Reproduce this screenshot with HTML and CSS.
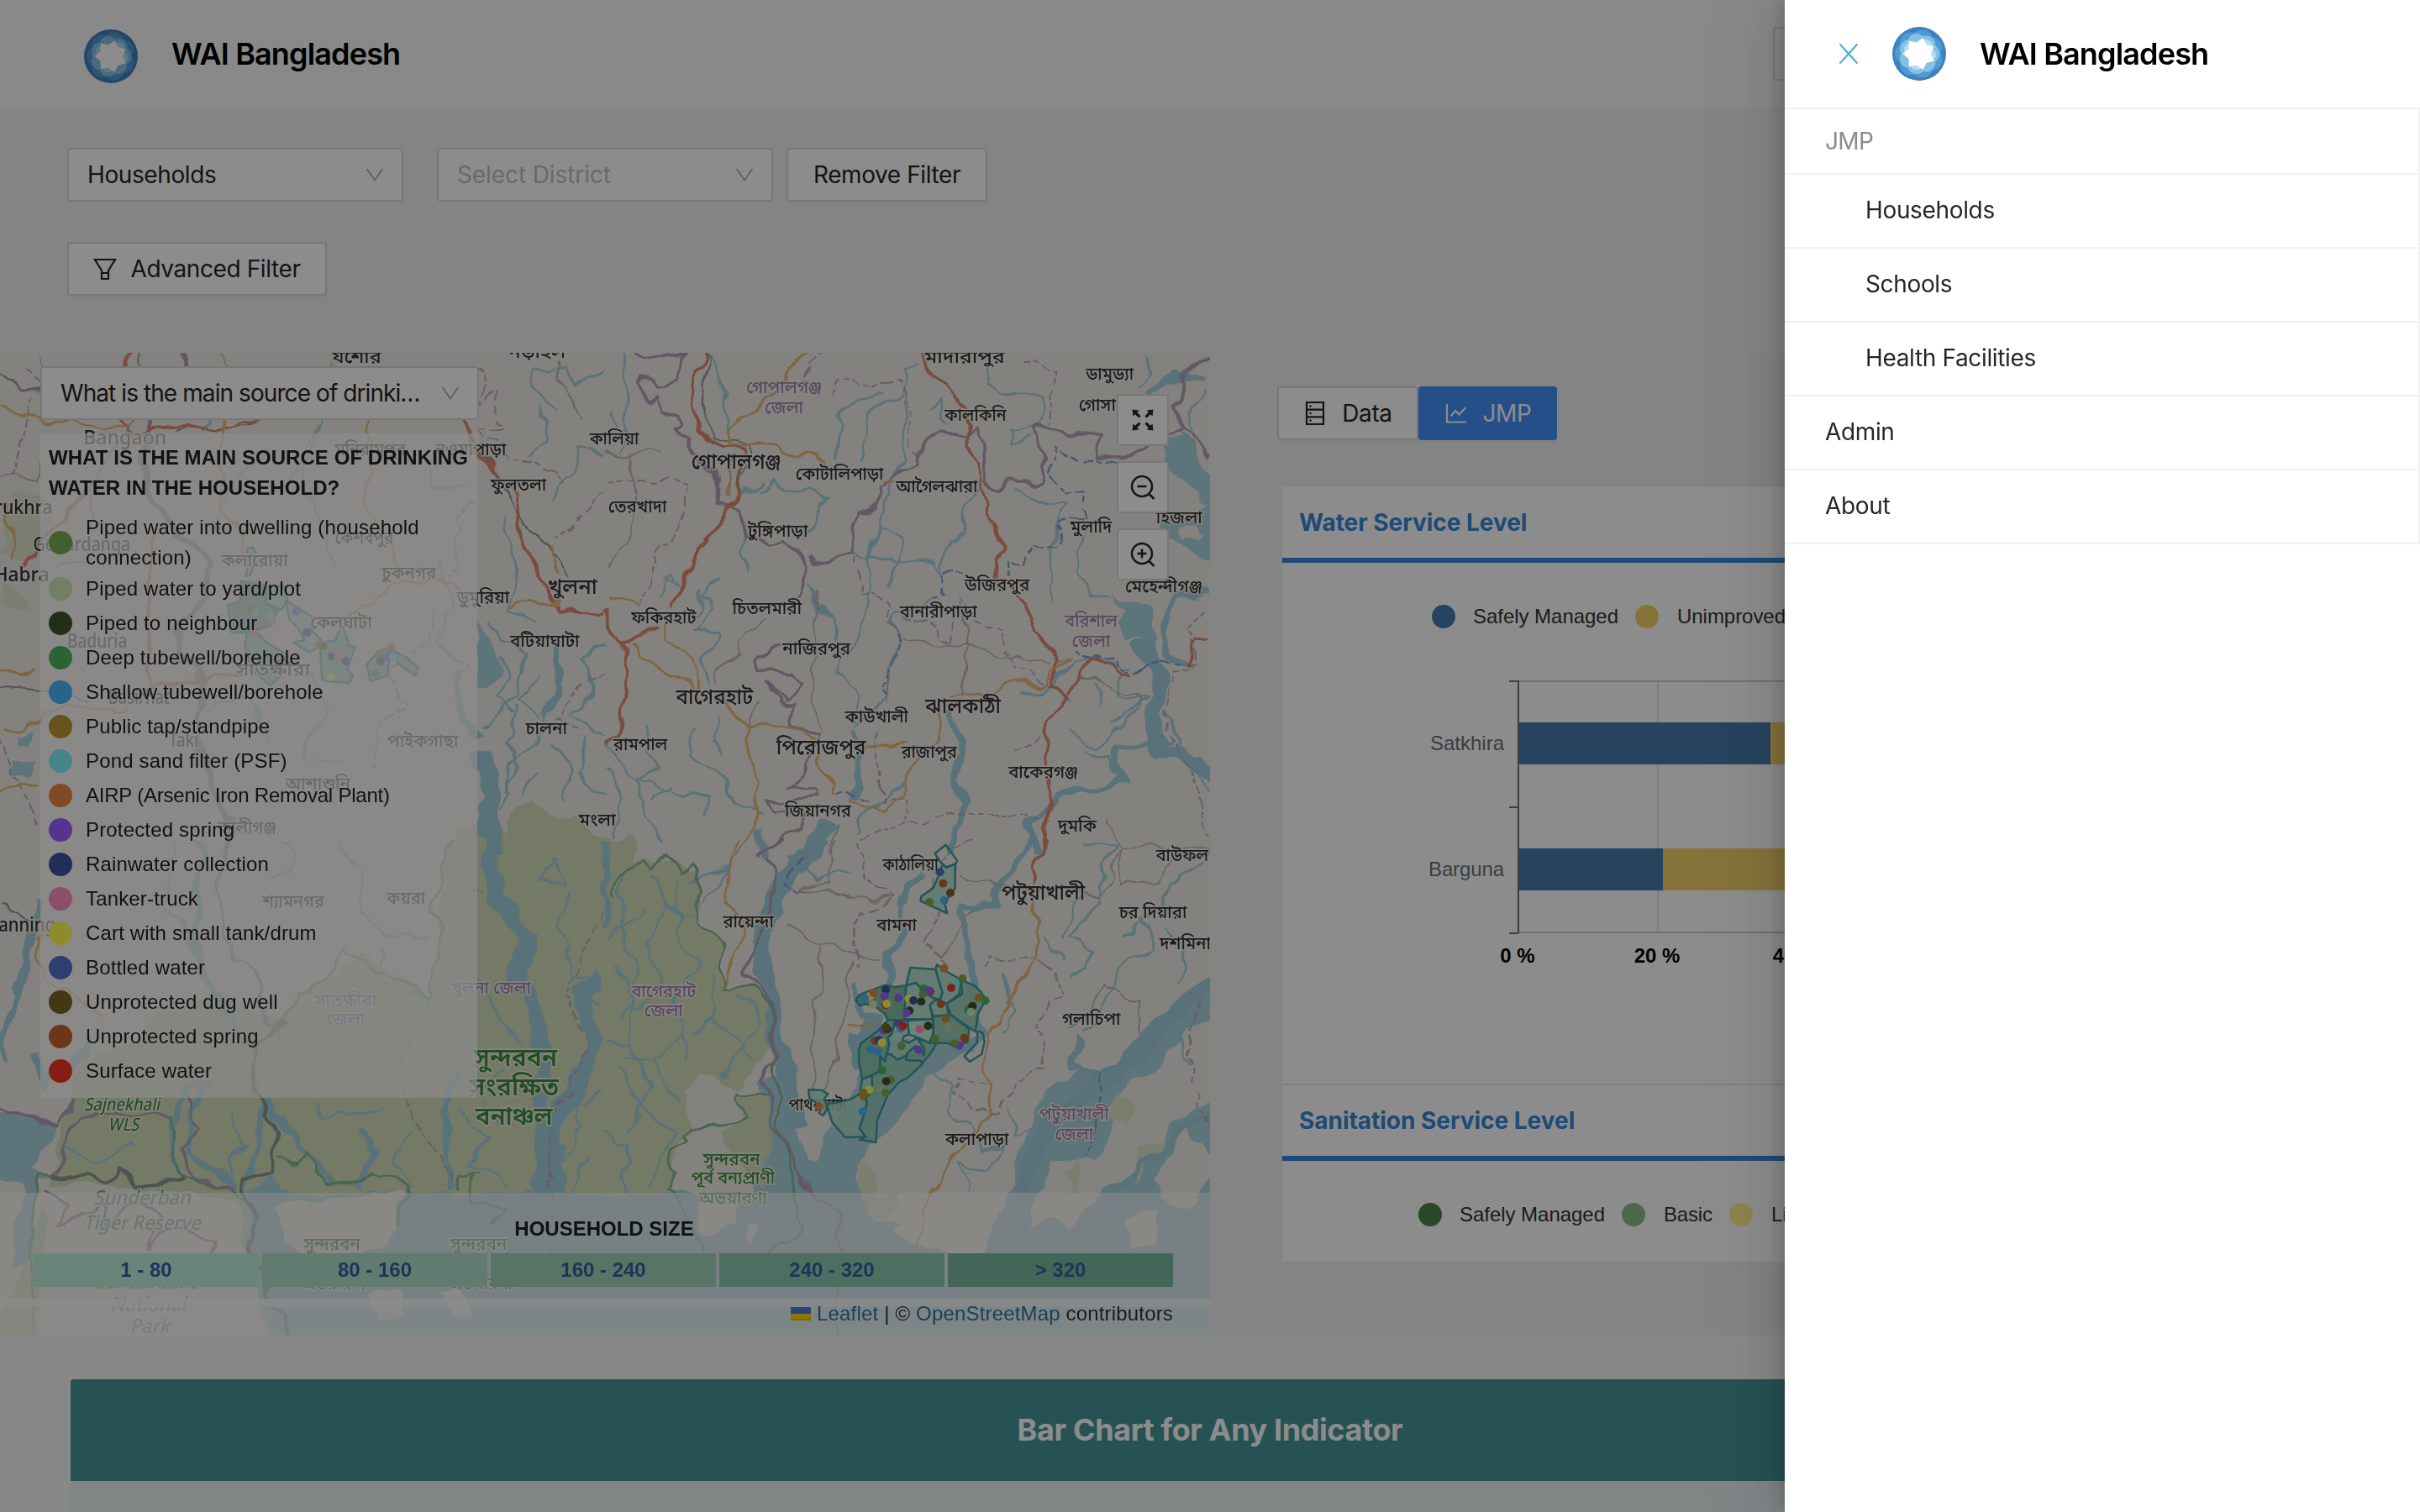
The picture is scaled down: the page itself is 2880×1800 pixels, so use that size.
FILE: index.html
```html
<!DOCTYPE html>
<html lang="en">
<head>
<meta charset="utf-8">
<title>WAI Bangladesh</title>
<link rel="stylesheet" href="styles.css">
</head>
<body>
<svg class="defs" width="0" height="0" aria-hidden="true">
  <symbol id="logo" viewBox="0 0 64 64">
    <circle cx="32" cy="32" r="32" fill="#3f80c0"/>
    <g fill="#5fb0e2" opacity=".55">
      <circle cx="16" cy="32" r="13"/><circle cx="22" cy="19.500" r="13"/><circle cx="35.600" cy="16.400" r="13"/><circle cx="46.400" cy="25" r="13"/><circle cx="46.400" cy="39" r="13"/><circle cx="35.600" cy="47.600" r="13"/><circle cx="22" cy="44.500" r="13"/>
    </g>
    <g fill="#a9dcf5" opacity=".6">
      <circle cx="20" cy="26.200" r="11"/><circle cx="29" cy="19" r="11"/><circle cx="40.300" cy="21.600" r="11"/><circle cx="45.300" cy="32" r="11"/><circle cx="40.300" cy="42.400" r="11"/><circle cx="29" cy="45" r="11"/><circle cx="20" cy="37.800" r="11"/>
    </g>
    <g fill="#d3edf9" opacity=".6">
      <circle cx="22" cy="27" r="8"/><circle cx="40" cy="23" r="8"/><circle cx="44" cy="34" r="8"/><circle cx="29" cy="43" r="8"/>
    </g>
    <path fill="#fff" stroke="#fff" stroke-width="1.500" stroke-linejoin="round" d="M13.500 32 20.300 26.400 20.500 17.500 29.100 19.300 36.100 14 40.100 21.800 48.700 24 45 32 48.700 40 40.100 42.200 36.100 50 29.100 44.700 20.500 46.500 20.300 37.600Z"/>
  </symbol>
  <symbol id="down" viewBox="0 0 24 24"><path d="M2.500 5 12 18.500 21.500 5" fill="none" stroke="currentColor" stroke-width="2"/></symbol>
</svg>

<div class="page">
  <header class="topbar">
    <svg class="logo"><use href="#logo"/></svg>
    <span class="brand">WAI Bangladesh</span>
    <span class="burger"></span>
  </header>

  <section class="filters">
    <div class="filter-row">
      <div class="select">Households<svg class="arrow"><use href="#down"/></svg></div>
      <div class="select placeholder">Select District<svg class="arrow"><use href="#down"/></svg></div>
      <div class="btn remove">Remove Filter</div>
    </div>
    <div class="filter-row">
      <div class="btn advanced">
        <svg class="ico" viewBox="0 0 28 28" fill="none" stroke="currentColor" stroke-width="2.200"><path d="M2 3H26L18 16V26H10V16ZM10 19H18"/></svg>
        <span>Advanced Filter</span>
      </div>
    </div>
  </section>

  <main class="main">
    <div class="map">
      <svg class="tiles" viewBox="0 420 1440 1170">
        <!-- bends the straight segments of rivers, roads and borders -->
        <filter id="meander" filterUnits="userSpaceOnUse" x="-40" y="380" width="1520" height="1250" color-interpolation-filters="sRGB">
          <feTurbulence type="fractalNoise" baseFrequency=".028" numOctaves="2" seed="4"/>
          <feDisplacementMap in="SourceGraphic" scale="26" xChannelSelector="R" yChannelSelector="G"/>
        </filter>
        <rect x="0" y="420" width="1440" height="1170" fill="#f1ede5"/>
        <g filter="url(#meander)">
        <!-- south-west tile -->
        <g class="tile" transform="translate(0 1000) scale(.4592 .38265)">
          <path class="forest" d="M1170 0 1130 110 1150 270 1110 480 950 350 840 440 760 480 740 560 540 470 430 520 320 640 250 660 190 720 150 960 150 1040 80 1250 -60 1640H1640V-10Z"/>
          <path class="forest" d="M20 880 60 860 140 890 80 1010 10 985Z"/>
          <path class="sea" d="M-60 840 60 850 150 890 80 1010 150 1040 110 1060 80 1300 20 1330 50 1080 -60 1060Z"/>
          <path class="sea" d="M640 1110 700 1040 740 1100 1640 1100V1640H740L650 1340Z"/>
          <path class="land" d="M720 1130 900 1110 1040 1100 1020 1260 820 1330 740 1250ZM960 1420 1040 1390 1050 1480 970 1500ZM1140 1400 1200 1400 1210 1500 1160 1480Z"/>
          <path class="land" d="M-60 1060 60 1080 20 1330 -60 1330ZM120 1080 300 1070 600 1120 650 1300 700 1560 740 1640H110Z"/>
          <g class="river wide"><path d="M1260 0 1290 170 1370 310 1330 420 1380 520 1410 660 1400 900 1410 1110"/><path d="M1600 400 1500 480 1530 640 1440 900 1430 1100"/></g>
          <g class="river mid"><path d="M20 700 0 620 40 540 80 300 110 180"/><path d="M90 660 120 760 190 700 230 640"/><path d="M1200 700 1150 840 1170 1090"/><path d="M640 650 560 490 500 300 520 0"/><path d="M680 800 640 1100"/><path d="M460 1030 440 900 480 770 540 760 500 850 500 980 620 1090"/><path d="M850 1060 760 920 680 800"/><path d="M930 900 990 960 920 1080"/></g>
          <g class="river"><path d="M440 0 450 160 440 240 520 310"/><path d="M730 0 760 60 700 120"/><path d="M870 0 940 90 930 220 1030 310 1110 300"/><path d="M1150 60 1170 130 1250 150"/><path d="M1370 0 1440 60 1390 130 1470 140 1430 50"/><path d="M830 820 850 860 900 870 1000 820"/><path d="M1190 850 1260 920 1230 1010 1310 1080"/><path d="M1460 1000 1520 900 1490 820 1568 780"/><path d="M590 850 630 950 580 1000 600 1060"/><path d="M1040 700 1090 570 1100 480 1000 450 990 330"/><path d="M700 560 760 700 920 720 980 800"/><path d="M1240 430 1290 560 1360 640"/><path d="M1470 330 1480 420 1568 440"/><path d="M170 960 250 1000 350 940"/><path d="M1480 160 1440 260 1480 340"/><path d="M1500 500 1568 520"/><path d="M1060 900 1020 1000 1060 1090"/><path d="M1300 700 1250 800 1290 880"/><path d="M1520 980 1480 1100"/></g>
          <g class="pa"><path d="M1170 0 1130 110 1120 220 1150 270 1110 480 970 400 900 340 840 440 770 480 740 560"/><path d="M730 990 770 1010 800 970 830 1060 940 1065 970 1030 1050 1090 1030 1200"/><path d="M1190 1090 1190 1040 1240 1040 1220 1120 1310 1160 1270 1200"/><path d="M150 1040 110 1030 80 1250 90 1600"/><path d="M440 850 460 1030 600 1090 650 1140"/></g>
          <g class="border"><path d="M590 0 570 220 610 370 650 400 700 590 740 570"/><path d="M0 835 150 890 190 800"/><path d="M150 1040 180 930 200 860 440 860"/><path d="M480 760 520 900 480 960 500 1040 620 1100"/><path d="M120 1090 180 1140 150 1200 270 1130 280 1200 340 1120 420 1180 380 1260 460 1200 560 1260 540 1330 640 1290"/></g>
          <path class="border dark" d="M740 570 660 650 660 790 720 900 710 1040 640 1050 640 1130 660 1180 650 1300 750 1540"/>
          <path class="border dark" d="M150 1040 180 1060 220 1040 280 1060 310 1020 350 1070 430 1060 470 1040"/>
          <g class="dash"><path d="M1568 210 1520 330 1510 400 1460 480 1510 640 1430 900 1420 1300"/><path d="M1040 740 1070 870 1140 980 1190 1090"/></g>
          <path class="road" d="M120 270 90 320 110 430 260 540"/><path class="rail" d="M0 200 80 250"/>
        </g>
        <!-- south-east tile -->
        <g class="tile" transform="translate(720 1000) scale(.4592 .38265)">
          <path class="sea" d="M0 1100H480L520 980 560 1000 590 930 700 930 650 1010 655 1110 700 1170 760 1190 750 1220 850 1285 980 1285 1040 1100 1100 900 1140 780 1220 720 1290 730 1640 320V450L1330 800 1290 1000 1160 1000 1110 1150 1200 1200 1640 720V1640H0Z"/>
          <path class="sea" d="M860 630 950 640 900 690 840 730 730 930 560 1000 500 900 460 740 400 740 380 1100 530 1110 560 1000 590 900 660 740 650 620Z"/>
          <path class="forest" d="M-10 200 30 100 100 50 190 70 250 120 230 260 300 320 310 460 380 450 440 580 410 700 340 770 250 730 200 800 230 890 190 940 180 1050 160 1100H-10Z"/>
          <path class="forest" d="M340 780 410 780 430 920 415 1090 380 1060 300 910 350 880Z"/>
          <path class="land" d="M470 560 540 640 600 780 590 850 560 1000 510 960 460 760ZM250 1110 350 1080 340 1200 250 1230ZM370 1190 400 1200 395 1270 375 1260Z"/>
          <path class="land" d="M1120 1120 1180 1110 1190 1000 1240 1010 1170 1180 1110 1200ZM1420 1050 1500 900 1600 1000 1530 1120 1440 1130ZM1350 1180 1430 1160 1420 1260 1370 1270Z"/>
          <path class="pale" d="M655 1000 690 1020 700 1110 760 1100 740 1170 690 1165 655 1110ZM1180 1030 1240 1000 1200 1110ZM1330 790 1370 820 1350 900 1290 870ZM1380 950 1450 930 1380 1060Z"/>
          <g class="river wide"><path d="M570 0 450 140 400 330 430 520 470 720 500 900"/><path d="M1600 390 1330 720 1160 870 1070 1100"/><path d="M660 600 650 700 690 560"/></g>
          <g class="river mid"><path d="M0 0 10 200 0 280"/><path d="M820 100 760 200 780 280 740 360 720 520"/><path d="M650 460 670 540 720 560 660 620"/><path d="M1110 0 1020 140 1010 200 930 200 950 420 970 600 900 670"/><path d="M1568 860 1440 960 1310 1090 1280 1200"/><path d="M1240 620 1210 700 1290 740"/></g>
          <g class="river"><path d="M50 100 40 260 90 420 40 560"/><path d="M120 100 160 200 110 330 150 480"/><path d="M200 130 190 270 240 380 180 530 220 680"/><path d="M20 380 70 480 60 640 120 760 60 900"/><path d="M270 420 280 560 360 640 300 740"/><path d="M40 720 100 840 180 900 110 1080"/><path d="M200 600 130 700 190 820"/><path d="M350 480 400 560 350 660 390 700"/><path d="M90 200 20 300"/><path d="M160 200 220 240"/><path d="M0 640 60 640"/><path d="M150 480 60 520"/><path d="M130 700 60 680"/><path d="M280 560 220 600"/><path d="M0 900 60 960 50 1090"/><path d="M1230 20 1330 20 1270 130 1290 190 1200 300 1270 330 1240 410 1200 420"/><path d="M1180 310 1210 200 1240 170"/><path d="M1568 60 1480 120 1440 220 1340 300"/><path d="M1390 240 1420 330 1350 390 1330 440 1240 600"/><path d="M850 720 900 770 880 850 950 870 980 960 1030 940 990 1030 920 1000 940 1090"/><path d="M1040 840 1060 920 1100 910"/><path d="M1568 540 1500 600 1520 700"/><path d="M480 60 560 120 620 90"/><path d="M230 130 330 80 250 190"/><path d="M1040 420 1060 520 1020 600"/><path d="M1140 300 1180 380"/><path d="M1450 280 1500 360 1480 440"/></g>
          <g class="pa"><path d="M30 180 40 110 100 60 120 75 160 45 200 100 230 80 250 150 225 200 235 260 295 320 310 460 380 450 435 560 440 760 460 940 500 1100 510 1210 380 1330"/><path d="M420 780 340 780 335 800 365 870 300 890 220 885 200 910 215 940 165 970 185 1040 160 1090 230 1180 240 1290"/></g>
          <path class="border" d="M470 0 410 20 445 110 430 220 370 390 400 470 440 560 440 690 410 740 430 860 460 930 510 1060 600 1180 610 1250 590 1568"/>
          <g class="dash"><path d="M660 0 670 120 740 180 670 220 650 300 650 390"/><path d="M950 0 900 40 850 120 870 220 840 300 870 390"/><path d="M980 400 1000 360 1120 370 1150 400 1190 480 1130 560 1130 700 1070 760 1010 850 900 800 920 740 990 770"/><path d="M1560 480 1520 600 1530 820 1568 900"/></g>
          <g class="grey"><path d="M470 280 660 360 720 385"/><path d="M600 0 590 140 560 130 500 150 590 160 640 190 740 180"/><path d="M960 210 860 370"/><path d="M920 100 1010 150 1100 160 1280 170 1340 30 1330 130 1440 130 1460 60 1568 40"/><path d="M550 320 560 450 530 680 560 800"/><path d="M640 370 620 560 580 760"/><path d="M1210 600 1290 450 1380 500 1390 610"/></g>
          <path class="road" d="M340 0 310 200 365 230 345 320 310 460"/><path class="road" d="M1120 130 1125 370 980 600 1000 850 850 1060 800 1280"/><path class="trunk" d="M1145 0 1115 90 1120 140"/><path class="road" d="M635 570 680 575 700 565"/>
          <path class="ferry" d="M550 0 470 120 500 155"/><path class="ferry" d="M1290 730 1260 990"/>
        </g>
        <!-- north-west tile -->
        <g class="tile" transform="translate(0 420) scale(.4592 .38265)">
          <path class="forest" d="M1165 1568 1190 1480 1260 1460 1310 1500 1330 1430 1380 1390 1440 1440 1490 1430 1568 1568Z"/>
          <path class="forest" opacity=".5" d="M40 460 120 440 130 560 60 640 0 620ZM0 700 60 740 80 800 0 780Z"/>
          <path class="sea" d="M1238 820 1270 900 1300 980 1260 1050 1240 1040ZM40 1180 80 1180 70 1220 40 1210ZM30 1260 100 1280 70 1330 30 1310Z"/>
          <g class="river wide"><path d="M1240 1240 1270 1300 1260 1400 1280 1568"/></g>
          <g class="river mid"><path d="M1450 900 1440 1060 1410 1120"/><path d="M1240 1200 1200 1100 1190 1000"/></g>
          <g class="river"><path d="M1568 60 1490 100 1460 30 1390 60 1390 120 1440 170"/><path d="M1400 160 1410 250 1370 330"/><path d="M1568 310 1510 300 1480 370 1430 460"/><path d="M1310 520 1340 700 1320 800 1390 840"/><path d="M1270 820 1300 900 1370 930 1350 1060 1250 1170"/><path d="M1568 900 1500 960 1540 1050 1480 1120 1568 1200"/><path d="M1420 1120 1380 1240 1320 1300 1290 1420"/><path d="M1430 1200 1480 1290 1470 1400"/><path d="M1340 1100 1310 1200 1350 1290 1300 1360"/><path d="M1290 940 1330 1000 1280 1080 1330 1120"/><path d="M1400 1000 1350 1080 1400 1140"/><path d="M1520 1200 1500 1300 1568 1380"/><path d="M1380 1300 1350 1380"/><path d="M560 0 600 60 530 250"/><path d="M860 30 820 240 780 420 870 640"/><path d="M1120 300 1130 420 1200 420"/><path d="M700 300 590 420 560 560"/><path d="M790 1000 860 1100 780 1250 880 1280"/><path d="M520 1110 640 1060 700 1200"/><path d="M1130 640 1180 780 1130 900 1210 1000"/></g>
          <path class="border heavy" d="M485 -20 480 40 400 130 390 210 370 350 400 460 470 580 540 650 530 760 460 860 470 960 530 1020 500 1120 540 1300 590 1440 580 1568"/>
          <g class="dash"><path d="M60 60 100 110 60 240 30 400"/><path d="M1568 440 1480 540 1430 580"/><path d="M1240 50 1260 110 1240 150 1290 130 1290 230 1240 250 1310 320 1400 360 1460 420"/><path d="M1240 460 1180 500 1170 700"/><path d="M1568 1000 1480 1060 1440 1140 1510 1180"/><path d="M970 1300 980 1180 1040 1080 1000 990 1110 900 1120 820"/><path d="M0 1190 40 1330 100 1450"/></g>
          <g class="rail"><path d="M0 65 110 135"/><path d="M460 250 500 238 630 236 700 190"/><path d="M1180 208 1290 380 1390 560 1470 700"/><path d="M0 1040 110 1050 220 1075"/></g>
          <g class="trunk"><path d="M365 -20 315 40"/><path d="M310 205 330 250 480 235 600 235 670 208"/><path d="M1180 208 1250 330 1350 440 1360 600 1440 790 1568 820"/><path d="M230 430 130 560 60 660"/><path d="M400 550 380 900 390 1040 640 1000"/></g>
          <g class="road"><path d="M0 165 60 190 230 235 330 240"/><path d="M0 970 50 1000 90 975"/><path d="M0 1160 50 1160 200 1090 350 1120"/><path d="M0 1370 100 1340"/><path d="M960 208 950 480 1060 700 900 830"/><path d="M20 480 40 640"/><path d="M1420 600 1440 700"/><path d="M570 200 570 470 650 620"/><path d="M1320 790 1400 780 1450 760"/><path d="M1060 700 1180 720 1240 740"/></g>
          <g class="grey"><path d="M0 380 100 400 110 330"/><path d="M100 0 110 130"/><path d="M360 0 370 140 300 300 240 400 230 640 130 670"/><path d="M820 208 780 350 700 450"/><path d="M1440 20 1480 160 1520 200"/></g>
        </g>
        <!-- north-east tile -->
        <g class="tile" transform="translate(720 420) scale(.4592 .38265)">
          <path class="sea" d="M1460 270 1500 260 1640 470V680L1490 590 1430 560 1450 500 1530 510 1550 480 1500 400 1440 330Z"/>
          <path class="land" d="M1490 555 1530 545 1545 580 1510 590Z"/>
          <path class="sea" d="M1310 740 1400 790 1420 900 1360 900 1330 850 1350 800Z"/>
          <g class="river wide"><path d="M1390 900 1430 1000 1430 1240 1500 1250 1600 1320"/><path d="M580 1450 520 1568"/></g>
          <g class="river mid"><path d="M1568 750 1480 760 1440 870 1460 950 1510 960"/><path d="M900 1568 900 1480 940 1400 900 1330 930 1220 890 1120"/><path d="M650 1400 650 1260 640 1180"/><path d="M1120 1568 1100 1460 1180 1380 1240 1360 1340 1340 1320 1230 1470 1200"/><path d="M390 1470 420 1568"/><path d="M1568 80 1480 70 1400 150"/></g>
          <g class="river"><path d="M50 0 60 170 30 300"/><path d="M10 180 20 230 50 230"/><path d="M270 0 310 140 320 240"/><path d="M720 130 650 150 610 190 600 340"/><path d="M780 120 680 190 665 330"/><path d="M800 30 770 60 785 120 780 300 730 430 710 540 690 580 680 770 640 940"/><path d="M710 550 780 580 750 650 730 730"/><path d="M640 630 740 650 860 660 870 690"/><path d="M870 690 900 590 930 570 930 480 960 420"/><path d="M390 420 430 400 540 440 580 450 520 590"/><path d="M370 560 360 620 372 680"/><path d="M340 430 400 400"/><path d="M990 0 990 90 1030 130 1140 130 1120 240 1060 240 1050 290 1100 270"/><path d="M1060 420 1110 460 1200 480 1170 560 1150 640 1160 700 1160 780"/><path d="M1240 570 1220 680 1250 760 1310 760"/><path d="M530 720 540 790 600 830 610 990 650 1050 650 1160"/><path d="M850 760 760 830 740 990 730 1080 650 1170"/><path d="M290 690 240 750 280 790 230 860 290 870 250 960 270 1020"/><path d="M110 1160 100 1260 150 1290 80 1330 200 1380 280 1400 270 1450"/><path d="M230 1160 220 1260 300 1310 340 1400 400 1420"/><path d="M0 1230 80 1330 100 1430 150 1530"/><path d="M140 760 180 690 200 730 160 700"/><path d="M1080 1050 1170 1040 1210 960 1280 960 1380 970"/><path d="M1360 980 1330 1060 1400 1080 1310 1150"/><path d="M1220 1180 1260 1220 1390 1100"/><path d="M1460 1120 1500 1250 1568 1360"/><path d="M1240 1240 1310 1260 1340 1350"/><path d="M780 1330 700 1390 650 1480"/><path d="M840 180 860 150 880 210"/><path d="M1560 120 1500 190 1520 290 1480 240"/><path d="M230 730 250 790 210 830"/><path d="M170 1340 120 1400"/><path d="M300 1130 270 1200 310 1250"/><path d="M0 1300 40 1400 20 1500"/><path d="M1280 1040 1290 1100"/><path d="M1400 0 1420 60 1380 110"/></g>
          <g class="ferry"><path d="M1320 340 1240 340 1180 285 1150 380 1200 440 1240 430 1240 510 1180 530 1170 610 1120 600 1090 660 1050 640 1040 700"/><path d="M930 690 870 690 880 750 850 760"/><path d="M750 870 750 960 720 1040 730 1080"/><path d="M600 1380 690 1390"/><path d="M1220 920 1260 960 1320 950 1390 990 1440 970 1520 960"/></g>
          <g class="border"><path d="M80 0 150 10 210 0 190 80 130 110 100 70 90 100 110 160 140 140 140 180 190 190 200 220 180 220 220 270 220 310 290 370 300 420 290 470 340 500 370 570 420 600 460 590 520 670 520 720 480 770"/><path d="M520 640 540 660 640 630 660 490 700 490 710 420 740 400 770 350 810 350 830 270 870 235 930 250 960 230 990 280 980 400 1020 430 1060 400 1130 400 1140 350 1110 240 1200 240 1290 270 1270 330 1400 300 1460 260 1490 230 1568 310"/><path d="M1568 0 1500 80 1470 180 1490 230"/><path d="M450 920 390 960 400 990 480 980 510 1020 460 1070 430 1030 450 1080 490 1090 480 1170 550 1190 530 1270 480 1360 550 1370 550 1390 480 1400 420 1380 430 1430 520 1440 510 1490 420 1530 400 1568"/></g>
          <g class="dash"><path d="M520 100 530 30 560 0"/><path d="M580 130 610 80 650 80 700 110 750 100 790 120 800 290 820 310"/><path d="M0 400 150 400 220 420 180 560 130 620 100 780"/><path d="M1080 30 1170 60 1150 230"/><path d="M650 640 660 740 690 740 740 800 760 880"/><path d="M780 830 860 850 900 900 920 760 960 850 1030 860 1050 980 1140 1020 1200 1080"/><path d="M710 1170 710 1390 780 1380 800 1430 780 1480"/><path d="M1060 1240 1130 1200"/><path d="M1568 790 1510 850 1530 960 1460 1000 1460 1170 1520 1300 1568 1500"/><path d="M660 1500 780 1480 900 1440 1130 1440"/></g>
          <g class="grey"><path d="M0 300 60 320 150 310"/><path d="M70 310 80 500 60 600 0 660"/><path d="M760 880 930 910 1160 970"/><path d="M930 830 940 920 920 1080"/><path d="M540 740 550 960 540 1100 560 1190"/><path d="M410 820 350 900 360 940 290 980 290 1020"/><path d="M600 1450 590 1568"/><path d="M1300 1440 1340 1540 1568 1540"/><path d="M740 990 730 1100"/><path d="M1220 1010 1380 1060 1390 1100"/><path d="M370 1170 380 1120 410 1090"/></g>
          <path class="rail" d="M265 0 260 200 290 260 380 285 375 320 330 450"/>
          <g class="trunk"><path d="M265 -30 225 140 240 230 310 290 360 300 330 450 300 530 240 610 210 720 170 800"/><path d="M800 -30 850 70 940 180 940 290 965 350 970 440 1030 620 1010 650 1020 700 1090 780 1110 860 1170 950 1180 1000 1160 1040 1190 1070 1140 1150 1155 1400 1130 1568"/><path d="M0 800 30 890 100 880 140 850"/><path d="M35 890 60 1000 40 1190 0 1230"/><path d="M1190 1060 1230 1000 1260 965 1320 970 1380 995"/><path d="M1568 900 1530 895 1505 965"/></g>
          <g class="road"><path d="M525 -10 440 130 320 240 330 290 430 280 460 305 540 310 580 350"/><path d="M0 770 70 770 100 790"/><path d="M160 830 165 890 230 950 240 1040"/><path d="M60 900 160 1010 230 1040"/><path d="M310 1080 370 1165 500 1180 550 1220 600 1340 590 1380"/><path d="M370 1170 370 1240 405 1330 380 1470 340 1568"/><path d="M670 1230 730 1215 790 1220"/><path d="M870 1120 860 1200 790 1310 770 1370 710 1415 640 1405"/><path d="M900 1070 980 1080 1050 1030 1150 1030 1200 950 1170 960"/><path d="M720 400 750 410"/><path d="M320 330 315 450"/></g>
        </g>
        </g>
        <!-- Satkhira unions and survey points -->
        <g class="tile" transform="translate(0 420) scale(.4592 .38265)">
          <g class="zone"><path d="M640 610 655 605 663 625 650 690 637 695 645 655Z"/><path class="z5" d="M590 785 622 775 625 710 680 720 690 780 720 800 700 850 640 870 600 870Z"/><path d="M690 730 735 725 745 770 730 800 690 780Z"/><path class="z2" d="M740 770 808 820 805 860 845 910 800 930 760 900 790 895 775 860 750 830Z"/><path class="z3" d="M840 900 870 895 885 840 905 910 920 915 900 985 915 1005 905 1028 835 1020 830 925Z"/><path class="z3" d="M985 925 1010 920 1005 1005 960 1022 950 970Z"/><path class="z3" d="M1010 920 1055 950 1085 980 1075 1005 1030 965Z"/><path class="z3" d="M640 870 665 870 690 900 745 940 745 985 700 1035 665 1000 650 985 635 910Z"/></g>
          <g stroke="none"><ellipse cx="769" cy="805" rx="11" ry="13" fill="#9960ff"/><ellipse cx="795" cy="871" rx="11" ry="13" fill="#3e55a0"/><ellipse cx="829" cy="908" rx="11" ry="13" fill="#bb9531"/><ellipse cx="840" cy="914" rx="9" ry="11" fill="#7d6423"/><ellipse cx="860" cy="945" rx="11" ry="13" fill="#3e55a0"/><ellipse cx="876" cy="942" rx="10" ry="13" fill="#ff91bf"/><ellipse cx="896" cy="960" rx="11" ry="13" fill="#3e55a0"/><ellipse cx="856" cy="1008" rx="11" ry="13" fill="#ffff54"/><ellipse cx="1014" cy="918" rx="11" ry="13" fill="#e98843"/><ellipse cx="984" cy="936" rx="11" ry="13" fill="#7bad54"/><ellipse cx="1002" cy="946" rx="11" ry="13" fill="#9960ff"/><ellipse cx="1019" cy="948" rx="11" ry="13" fill="#7df2f9"/><ellipse cx="986" cy="960" rx="11" ry="13" fill="#3e55a0"/><ellipse cx="973" cy="997" rx="11" ry="13" fill="#4eb760"/><ellipse cx="661" cy="808" rx="11" ry="13" fill="#7df2f9"/><ellipse cx="650" cy="796" rx="11" ry="13" fill="#bb9531"/><ellipse cx="700" cy="817" rx="11" ry="13" fill="#7df2f9"/><ellipse cx="703" cy="836" rx="11" ry="13" fill="#ff91bf"/><ellipse cx="657" cy="874" rx="11" ry="13" fill="#ff91bf"/><ellipse cx="669" cy="716" rx="10" ry="10" fill="#ff91bf"/><ellipse cx="722" cy="984" rx="12" ry="14" fill="#f53626"/></g>
        </g>
        <g transform="scale(1.83673)" class="labels">
          <g class="t"><text x="231" y="235" textLength="32" lengthAdjust="spacingAndGlyphs">যশোর</text><text x="348" y="232" textLength="37" lengthAdjust="spacingAndGlyphs">নড়াইল</text><text x="625" y="235" textLength="52" lengthAdjust="spacingAndGlyphs">মাদারীপুর</text><text x="719" y="246" textLength="31" lengthAdjust="spacingAndGlyphs">ডামুড্যা</text><text x="711" y="266" textLength="24" lengthAdjust="spacingAndGlyphs">গোসা</text><text x="632" y="273" textLength="40" lengthAdjust="spacingAndGlyphs">কালকিনি</text><text x="398" y="288" textLength="32" lengthAdjust="spacingAndGlyphs">কালিয়া</text><text x="544" y="311" textLength="57" lengthAdjust="spacingAndGlyphs">কোটালিপাড়া</text><text x="607" y="319" textLength="53" lengthAdjust="spacingAndGlyphs">আগৈলঝারা</text><text x="413" y="332" textLength="38" lengthAdjust="spacingAndGlyphs">তেরখাদা</text><text x="504" y="348" textLength="39" lengthAdjust="spacingAndGlyphs">টুঙ্গিপাড়া</text><text x="707" y="345" textLength="27" lengthAdjust="spacingAndGlyphs">মুলাদি</text><text x="764" y="339" textLength="30" lengthAdjust="spacingAndGlyphs">হিজলা</text><text x="754" y="384" textLength="50" lengthAdjust="spacingAndGlyphs">মেহেন্দীগঞ্জ</text><text x="646" y="383" textLength="42" lengthAdjust="spacingAndGlyphs">উজিরপুর</text><text x="497" y="398" textLength="45" lengthAdjust="spacingAndGlyphs">চিতলমারী</text><text x="608" y="400" textLength="50" lengthAdjust="spacingAndGlyphs">বানারীপাড়া</text><text x="430" y="404" textLength="42" lengthAdjust="spacingAndGlyphs">ফকিরহাট</text><text x="529" y="424" textLength="44" lengthAdjust="spacingAndGlyphs">নাজিরপুর</text><text x="568" y="468" textLength="41" lengthAdjust="spacingAndGlyphs">কাউখালী</text><text x="415" y="486" textLength="35" lengthAdjust="spacingAndGlyphs">রামপাল</text><text x="602" y="491" textLength="36" lengthAdjust="spacingAndGlyphs">রাজাপুর</text><text x="676" y="504" textLength="45" lengthAdjust="spacingAndGlyphs">বাকেরগঞ্জ</text><text x="530" y="529" textLength="43" lengthAdjust="spacingAndGlyphs">জিয়ানগর</text><text x="698" y="539" textLength="25" lengthAdjust="spacingAndGlyphs">দুমকি</text><text x="766" y="558" textLength="34" lengthAdjust="spacingAndGlyphs">বাউফল</text><text x="590" y="564" textLength="36" lengthAdjust="spacingAndGlyphs">কাঠালিয়া</text><text x="747" y="595" textLength="44" lengthAdjust="spacingAndGlyphs">চর দিয়ারা</text><text x="768" y="615" textLength="33" lengthAdjust="spacingAndGlyphs">দশমিনা</text><text x="485" y="601" textLength="33" lengthAdjust="spacingAndGlyphs">রায়েন্দা</text><text x="581" y="603" textLength="26" lengthAdjust="spacingAndGlyphs">বামনা</text><text x="707" y="664" textLength="38" lengthAdjust="spacingAndGlyphs">গলাচিপা</text><text x="530" y="720" textLength="38" lengthAdjust="spacingAndGlyphs">পাথরঘাটা</text><text x="633" y="742" textLength="41" lengthAdjust="spacingAndGlyphs">কলাপাড়া</text><text x="305" y="295" textLength="46" lengthAdjust="spacingAndGlyphs">নওয়াপাড়া</text><text x="240" y="295" textLength="46" lengthAdjust="spacingAndGlyphs">মনিরামপুর</text><text x="336" y="318" textLength="36" lengthAdjust="spacingAndGlyphs">ফুলতলা</text><text x="313" y="391" textLength="34" lengthAdjust="spacingAndGlyphs">ডুমুরিয়া</text><text x="353" y="419" textLength="45" lengthAdjust="spacingAndGlyphs">বটিয়াঘাটা</text><text x="354" y="476" textLength="27" lengthAdjust="spacingAndGlyphs">চালনা</text><text x="387" y="535" textLength="24" lengthAdjust="spacingAndGlyphs">মংলা</text><text x="236" y="352" textLength="38" lengthAdjust="spacingAndGlyphs">কেশবপুর</text><text x="165" y="367" textLength="43" lengthAdjust="spacingAndGlyphs">কলারোয়া</text><text x="265" y="375" textLength="35" lengthAdjust="spacingAndGlyphs">চুকনগর</text><text x="221" y="407" textLength="40" lengthAdjust="spacingAndGlyphs">কেলঘাটা</text><text x="177" y="438" textLength="48" lengthAdjust="spacingAndGlyphs">সাতক্ষীরা</text><text x="274" y="484" textLength="46" lengthAdjust="spacingAndGlyphs">পাইকগাছা</text><text x="206" y="512" textLength="42" lengthAdjust="spacingAndGlyphs">আশাশুনি</text><text x="160" y="540" textLength="38" lengthAdjust="spacingAndGlyphs">কালীগঞ্জ</text><text x="190" y="588" textLength="40" lengthAdjust="spacingAndGlyphs">শ্যামনগর</text><text x="263" y="586" textLength="25" lengthAdjust="spacingAndGlyphs">কয়রা</text></g>
          <g class="t big"><text x="477" y="304" textLength="58" lengthAdjust="spacingAndGlyphs">গোপালগঞ্জ</text><text x="463" y="456" textLength="50" lengthAdjust="spacingAndGlyphs">বাগেরহাট</text><text x="624" y="462" textLength="49" lengthAdjust="spacingAndGlyphs">ঝালকাঠী</text><text x="532" y="489" textLength="58" lengthAdjust="spacingAndGlyphs">পিরোজপুর</text><text x="676" y="583" textLength="54" lengthAdjust="spacingAndGlyphs">পটুয়াখালী</text><text x="371" y="385" textLength="32" lengthAdjust="spacingAndGlyphs">খুলনা</text></g>
          <g class="t purple"><text x="508" y="255" textLength="49" lengthAdjust="spacingAndGlyphs">গোপালগঞ্জ</text><text x="508" y="268" textLength="25" lengthAdjust="spacingAndGlyphs">জেলা</text><text x="707" y="406" textLength="34" lengthAdjust="spacingAndGlyphs">বরিশাল</text><text x="707" y="419" textLength="25" lengthAdjust="spacingAndGlyphs">জেলা</text><text x="430" y="646" textLength="42" lengthAdjust="spacingAndGlyphs">বাগেরহাট</text><text x="430" y="659" textLength="25" lengthAdjust="spacingAndGlyphs">জেলা</text><text x="696" y="726" textLength="45" lengthAdjust="spacingAndGlyphs">পটুয়াখালী</text><text x="696" y="739" textLength="25" lengthAdjust="spacingAndGlyphs">জেলা</text><text x="224" y="652" textLength="40" lengthAdjust="spacingAndGlyphs">সাতক্ষীরা</text><text x="224" y="664" textLength="25" lengthAdjust="spacingAndGlyphs">জেলা</text><text x="318" y="644" textLength="52" lengthAdjust="spacingAndGlyphs">খুলনা জেলা</text></g>
          <g class="t green"><text x="474" y="755" textLength="37" lengthAdjust="spacingAndGlyphs">সুন্দরবন</text><text x="475" y="767" textLength="54" lengthAdjust="spacingAndGlyphs">পূর্ব বন্যপ্রাণী</text><text x="475" y="780" textLength="44" lengthAdjust="spacingAndGlyphs">অভয়ারণ্য</text><text x="215" y="810" textLength="37" lengthAdjust="spacingAndGlyphs">সুন্দরবন</text><text x="310" y="810" textLength="37" lengthAdjust="spacingAndGlyphs">সুন্দরবন</text><text x="216" y="836" textLength="42" lengthAdjust="spacingAndGlyphs">অভয়ারণ্য</text><text x="311" y="836" textLength="42" lengthAdjust="spacingAndGlyphs">অভয়ারণ্য</text></g>
          <g class="t green huge"><text x="334" y="691" textLength="54" lengthAdjust="spacingAndGlyphs">সুন্দরবন</text><text x="333" y="710" textLength="58" lengthAdjust="spacingAndGlyphs">সংরক্ষিত</text><text x="333" y="729" textLength="50" lengthAdjust="spacingAndGlyphs">বনাঞ্চল</text></g>
          <g class="t latin"><text x="81" y="288" textLength="54" lengthAdjust="spacingAndGlyphs">Bangaon</text><text x="53" y="357" textLength="63" lengthAdjust="spacingAndGlyphs">Gobardanga</text><text x="12" y="333" textLength="44" lengthAdjust="spacingAndGlyphs">arukhra</text><text x="14" y="377" textLength="36" lengthAdjust="spacingAndGlyphs">Habra</text><text x="63" y="420" textLength="39" lengthAdjust="spacingAndGlyphs">Baduria</text><text x="90" y="456" textLength="40" lengthAdjust="spacingAndGlyphs">Basirhat</text><text x="119" y="484" textLength="19" lengthAdjust="spacingAndGlyphs">Taki</text><text x="14" y="604" textLength="44" lengthAdjust="spacingAndGlyphs">Canning</text></g>
          <g class="t green italic"><text x="79" y="720" textLength="49" lengthAdjust="spacingAndGlyphs">Sajnekhali</text><text x="80" y="733" textLength="20" lengthAdjust="spacingAndGlyphs">WLS</text></g>
          <g class="t green italic faint"><text x="92" y="781" textLength="63" lengthAdjust="spacingAndGlyphs">Sunderban</text><text x="92" y="797" textLength="76" lengthAdjust="spacingAndGlyphs">Tiger Reserve</text><text x="95" y="835" textLength="68" lengthAdjust="spacingAndGlyphs">Sundarbans</text><text x="96" y="850" textLength="49" lengthAdjust="spacingAndGlyphs">National</text><text x="97" y="864" textLength="26" lengthAdjust="spacingAndGlyphs">Park</text></g>
        </g>
        <!-- Barguna unions -->
        <g class="tile zone" transform="translate(720 1000) scale(.4592 .38265)">
          <path d="M875 75 885 85 908 75 907 150 880 195 887 228 818 190 820 175 850 150 865 110Z"/><path class="empty" d="M883 15 913 65 908 75 885 85 870 70 855 42Z"/><path d="M527 777 560 778 578 790 568 805 578 830 566 857 555 850 558 830 545 815 530 805Z"/>
        </g>
        <g class="tile zone" transform="translate(1000 1160) scale(.33333)">
          <path class="z5" d="M55 90 70 72 115 55 160 38 195 45 235 40 228 165 170 163 158 140 130 118 90 105 70 112Z"/>
          <path class="z2" d="M235 40 250 -24 340 -18 365 65 355 90 335 85 310 70 270 30Z"/>
          <path class="z2" d="M340 -18 345 -35 372 -15 432 20 425 70 380 105 355 95 365 65Z"/>
          <path class="z3" d="M432 20 480 40 500 60 520 90 492 140 482 205 395 145 380 105 435 70Z"/>
          <path d="M235 40 270 30 310 70 340 90 320 110 330 160 228 160Z"/>
          <path class="z2" d="M340 90 380 105 385 145 332 150 320 110Z"/>
          <path class="z1" d="M240 165 330 160 332 210 318 245 275 225 245 215Z"/>
          <path class="z4" d="M332 150 395 145 460 195 455 240 415 258 380 245 345 245 318 245 332 210Z"/>
          <path d="M195 163 240 165 245 215 228 220 222 235 245 245 275 225 300 265 300 290 235 290 205 305 180 285 165 290 170 225 185 210Z"/>
          <path class="z4" d="M170 163 195 163 185 210 170 225 175 250 160 310 143 292 143 345 78 375 66 310 66 270 75 245 130 205Z"/>
          <path class="z3" d="M143 292 160 310 165 285 180 285 205 305 235 290 235 305 285 308 295 318 240 370 210 385 170 430 132 520 127 600 70 590 90 580 68 550 85 500 95 460 90 440 113 420V360L143 345Z"/>
          <path class="z3" d="M235 305 240 280 270 255 300 290 300 265 275 228 318 245 345 245 320 285 295 315 285 308Z"/>
          <path class="z2" d="M78 375 113 360V420L90 440 95 460 85 500 68 550 90 580 18 582 -28 530 -50 463 0 455 40 445 70 425Z"/>
          <path class="empty" d="M490 203 508 208 515 240 505 285 462 312 443 292 488 245Z"/>
        </g>
        <g transform="translate(1000 1160) scale(.33333)">
          <circle cx="356" cy="-365" r="15" fill="#5074cc"/><circle cx="367" cy="-325" r="15" fill="#c4642d"/><circle cx="393" cy="-291" r="15" fill="#7d6423"/><circle cx="318" cy="-258" r="15" fill="#7bad54"/><circle cx="371" cy="-264" r="15" fill="#4cb4f9"/><circle cx="-76" cy="472" r="15" fill="#e98843"/><circle cx="371" cy="-21" r="15" fill="#e98843"/>
          <circle cx="104" cy="79" r="15" fill="#ffff54"/><circle cx="87" cy="85" r="15" fill="#4cb4f9"/><circle cx="118" cy="66" r="15" fill="#e98843"/><circle cx="162" cy="55" r="15" fill="#3e55a0"/><circle cx="158" cy="78" r="15" fill="#9960ff"/><circle cx="117" cy="108" r="15" fill="#cfe7bb"/><circle cx="162" cy="110" r="15" fill="#c4642d"/><circle cx="166" cy="105" r="15" fill="#ffff54"/><circle cx="208" cy="84" r="15" fill="#9960ff"/><circle cx="244" cy="87" r="15" fill="#ffff54"/><circle cx="261" cy="93" r="15" fill="#3e55a0"/><circle cx="289" cy="97" r="15" fill="#3e552c"/><circle cx="295" cy="70" r="15" fill="#7bad54"/><circle cx="297" cy="51" r="15" fill="#4eb760"/><circle cx="321" cy="61" r="15" fill="#f53626"/><circle cx="316" cy="58" r="15" fill="#9960ff"/><circle cx="247" cy="130" r="15" fill="#3e552c"/><circle cx="237" cy="138" r="15" fill="#9960ff"/><circle cx="359" cy="106" r="15" fill="#c4642d"/><circle cx="411" cy="34" r="15" fill="#7df2f9"/><circle cx="396" cy="48" r="15" fill="#f53626"/><circle cx="436" cy="15" r="15" fill="#7bad54"/><circle cx="494" cy="83" r="15" fill="#bb9531"/><circle cx="518" cy="94" r="15" fill="#4eb760"/><circle cx="457" cy="125" r="15" fill="#4eb760"/><circle cx="472" cy="113" r="15" fill="#3e552c"/><circle cx="467" cy="134" r="15" fill="#cfe7bb"/><circle cx="377" cy="158" r="15" fill="#bb9531"/><circle cx="386" cy="188" r="15" fill="#b4cfa0"/><circle cx="443" cy="227" r="15" fill="#c4642d"/><circle cx="425" cy="254" r="15" fill="#9960ff"/><circle cx="407" cy="247" r="15" fill="#7bad54"/><circle cx="339" cy="230" r="15" fill="#7bad54"/><circle cx="313" cy="184" r="15" fill="#3e552c"/><circle cx="284" cy="196" r="15" fill="#ff91bf"/><circle cx="209" cy="178" r="15" fill="#5074cc"/><circle cx="216" cy="193" r="15" fill="#4cb4f9"/><circle cx="223" cy="184" r="15" fill="#f53626"/><circle cx="154" cy="200" r="15" fill="#9960ff"/><circle cx="168" cy="196" r="15" fill="#3e552c"/><circle cx="162" cy="188" r="15" fill="#7d6423"/><circle cx="124" cy="237" r="15" fill="#c4642d"/><circle cx="139" cy="235" r="15" fill="#5a4fc0"/><circle cx="149" cy="244" r="15" fill="#ffff54"/><circle cx="108" cy="267" r="15" fill="#4cb4f9"/><circle cx="133" cy="275" r="15" fill="#4cb4f9"/><circle cx="218" cy="256" r="15" fill="#7bad54"/><circle cx="279" cy="270" r="15" fill="#9960ff"/><circle cx="149" cy="342" r="15" fill="#4eb760"/><circle cx="180" cy="377" r="15" fill="#7bad54"/><circle cx="164" cy="382" r="15" fill="#3e552c"/><circle cx="145" cy="407" r="15" fill="#b4cfa0"/><circle cx="161" cy="424" r="15" fill="#7bad54"/><circle cx="104" cy="412" r="15" fill="#ffff54"/><circle cx="83" cy="423" r="15" fill="#bb9531"/><circle cx="83" cy="436" r="15" fill="#bb9531"/><circle cx="81" cy="490" r="15" fill="#4cb4f9"/>
        </g>
      </svg>

      <div class="map-left">
        <div class="select question">What is the main source of drinki…<svg class="arrow"><use href="#down"/></svg></div>
        <div class="legend">
          <div class="legend-title">WHAT IS THE MAIN SOURCE OF DRINKING<br>WATER IN THE HOUSEHOLD?</div>
          <ul>
            <li class="two"><i class="c1"></i><span>Piped water into dwelling (household<br>connection)</span></li>
            <li><i class="c2"></i>Piped water to yard/plot</li>
            <li><i class="c3"></i>Piped to neighbour</li>
            <li><i class="c4"></i>Deep tubewell/borehole</li>
            <li><i class="c5"></i>Shallow tubewell/borehole</li>
            <li><i class="c6"></i>Public tap/standpipe</li>
            <li><i class="c7"></i>Pond sand filter (PSF)</li>
            <li class="tight"><i class="c8"></i>AIRP (Arsenic Iron Removal Plant)</li>
            <li><i class="c9"></i>Protected spring</li>
            <li><i class="c10"></i>Rainwater collection</li>
            <li><i class="c11"></i>Tanker-truck</li>
            <li><i class="c12"></i>Cart with small tank/drum</li>
            <li><i class="c13"></i>Bottled water</li>
            <li><i class="c14"></i>Unprotected dug well</li>
            <li><i class="c15"></i>Unprotected spring</li>
            <li><i class="c16"></i>Surface water</li>
          </ul>
        </div>
      </div>

      <div class="map-controls">
        <div class="ctl"><svg viewBox="0 0 28 28" fill="currentColor"><path d="M1.500 1.500 9.500 2.500 7.200 4.800 11.600 9.400 9.400 11.600 4.800 7.200 2.500 9.500ZM26.500 1.500 25.500 9.500 23.200 7.200 18.600 11.600 16.400 9.400 20.800 4.800 18.500 2.500ZM1.500 26.500 2.500 18.500 4.800 20.800 9.400 16.400 11.600 18.600 7.200 23.200 9.500 25.500ZM26.500 26.500 18.500 25.500 20.800 23.200 16.400 18.600 18.600 16.400 23.200 20.800 25.500 18.500Z"/></svg></div>
        <div class="ctl"><svg viewBox="0 0 28 28" fill="none" stroke="currentColor" stroke-width="2.500"><circle cx="13" cy="13" r="12"/><path d="M7.500 13H18.500M21.500 22 27.500 28"/></svg></div>
        <div class="ctl"><svg viewBox="0 0 28 28" fill="none" stroke="currentColor" stroke-width="2.500"><circle cx="13" cy="13" r="12"/><path d="M7.500 13H18.500M13 7.500V18.500M21.500 22 27.500 28"/></svg></div>
      </div>

      <div class="map-bottom">
        <div class="sizes">
          <div class="sizes-title">HOUSEHOLD SIZE</div>
          <div class="ramp"><span class="r1">1 - 80</span><span class="r2">80 - 160</span><span class="r3">160 - 240</span><span class="r4">240 - 320</span><span class="r5">&gt; 320</span></div>
        </div>
        <div class="attribution"><svg class="flag" viewBox="0 0 12 8"><path fill="#4c7be1" d="M0 0h12v4H0z"/><path fill="#ffd500" d="M0 4h12v3H0z"/><path fill="#e0bc00" d="M0 7h12v1H0z"/></svg><span><a>Leaflet</a> | © <a>OpenStreetMap</a> contributors</span></div>
      </div>
    </div>

    <div class="side">
      <div class="tabs">
        <div class="btn tab"><svg class="ico" viewBox="0 0 28 28" fill="none" stroke="currentColor" stroke-width="2.200"><rect x="4" y="1" width="20" height="26"/><path d="M4 9.700H24M4 18.300H24"/><g fill="currentColor" stroke="none"><circle cx="8.500" cy="5.500" r="1.300"/><circle cx="8.500" cy="14" r="1.300"/><circle cx="8.500" cy="22.500" r="1.300"/></g></svg><span>Data</span></div>
        <div class="btn tab active"><svg class="ico" viewBox="0 0 28 28" fill="none" stroke="currentColor" stroke-width="2.200"><path d="M3 3V24.500H26M7.500 17.500 13 11 17.500 15.500 25.500 7"/></svg><span>JMP</span></div>
      </div>
      <div class="cards">
        <section class="card">
          <h2>Water Service Level</h2>
          <svg class="chart c-water" viewBox="1526 670 1268 620">
            <circle cx="1718" cy="734" r="14" fill="#457bad"/><text class="key" x="1753" y="742" textLength="173">Safely Managed</text>
            <circle cx="1960" cy="734" r="14" fill="#f3d16b"/><text class="key" x="1996" y="742" textLength="129">Unimproved</text>
            <path d="M1973 811V1110" stroke="#e0e6f1" stroke-width="2"/>
            <path d="M1807 811H2760M1807 1110H2760" stroke="#ccc" stroke-width="2"/>
            <rect x="1807" y="860" width="300" height="50" fill="#457bad"/><rect x="2107" y="860" width="500" height="50" fill="#f3d16b"/>
            <rect x="1807" y="1010" width="172" height="50" fill="#457bad"/><rect x="1979" y="1010" width="600" height="50" fill="#f3d16b"/>
            <path d="M1807 810V1111M1796 811H1807M1796 961H1807M1796 1111H1807" stroke="#6e7079" stroke-width="2" fill="none"/>
            <text class="axis" x="1790" y="893" text-anchor="end" textLength="88">Satkhira</text><text class="axis" x="1790" y="1043" text-anchor="end" textLength="90">Barguna</text>
            <g class="pct"><text x="1806" y="1146">0 %</text><text x="1972" y="1146">20 %</text><text x="2137" y="1146">40 %</text></g>
          </svg>
        </section>
        <section class="card">
          <h2>Sanitation Service Level</h2>
          <svg class="chart c-sanitation" viewBox="1526 1382 1268 120">
            <circle cx="1702" cy="1446" r="14" fill="#4d814d"/><text class="key" x="1737" y="1454" textLength="173">Safely Managed</text>
            <circle cx="1944" cy="1446" r="14" fill="#8bc187"/><text class="key" x="1980" y="1454" textLength="58">Basic</text>
            <circle cx="2072" cy="1446" r="14" fill="#fbf08b"/><text class="key" x="2108" y="1454">Limited</text>
          </svg>
        </section>
      </div>
    </div>
  </main>

  <section class="indicator">
    <div class="indicator-title">Bar Chart for Any Indicator</div>
    <div class="indicator-body"></div>
  </section>

  <div class="mask"></div>
  <aside class="drawer">
    <div class="drawer-head">
      <svg class="close" viewBox="0 0 24 24" fill="none" stroke="#56a9da" stroke-width="2.200"><path d="M1.500 0.500 22.500 23.500M22.500 0.500 1.500 23.500"/></svg>
      <svg class="logo"><use href="#logo"/></svg>
      <span class="brand">WAI Bangladesh</span>
    </div>
    <nav class="menu">
      <div class="group">JMP</div>
      <a class="sub">Households</a>
      <a class="sub">Schools</a>
      <a class="sub">Health Facilities</a>
      <a>Admin</a>
      <a>About</a>
    </nav>
  </aside>
</div>
</body>
</html>
```
FILE: styles.css
```css
* { box-sizing: border-box; }
body { margin: 0; font: 28px/44px Inter, "Noto Sans", sans-serif; letter-spacing: -0.35px; color: #262626; background: #f7f8f9; }
.defs { position: absolute; }
.page { position: relative; width: 2880px; height: 1800px; overflow: hidden; display: flex; flex-direction: column; }
svg { display: block; flex: none; }

.topbar { height: 128px; flex: none; display: flex; align-items: center; padding-left: 100px; background: #f9f9f9; }
.topbar .logo { margin-top: 6px; }
.logo { width: 64px; height: 64px; }
.brand { margin-left: 40px; font-size: 36px; font-weight: 600; color: #000; letter-spacing: -0.85px; white-space: nowrap; }
.burger { width: 64px; height: 64px; margin-left: auto; margin-right: 706px; border: 2px solid #d9d9d9; border-radius: 4px; }

.filters { height: 292px; flex: none; background: #f1f1f1; padding: 48px 80px; display: flex; flex-direction: column; gap: 48px; }
.filter-row { display: flex; }
.select { width: 400px; height: 64px; border: 2px solid #d9d9d9; border-radius: 4px; background: #fff; display: flex; align-items: center; justify-content: space-between; padding: 0 20px 0 22px; white-space: nowrap; letter-spacing: -0.4px; }
.select + .select { margin-left: 40px; }
.placeholder { color: #bfbfbf; letter-spacing: -0.1px; }
.arrow { width: 24px; height: 24px; color: #b5b5b5; }
.btn { height: 64px; border: 2px solid #d9d9d9; border-radius: 4px; background: #fff; display: flex; align-items: center; justify-content: center; box-shadow: 0 4px 0 rgba(0,0,0,.02); white-space: nowrap; letter-spacing: -0.4px; }
.remove { width: 239px; margin-left: 16px; }
.advanced { width: 309px; gap: 16px; }
.ico { width: 28px; height: 28px; }

.main { height: 1170px; flex: none; display: grid; grid-template-columns: 1440px 1440px; background: #f0f0f0; }
.map { position: relative; overflow: hidden; font-family: "Liberation Sans", Arial, sans-serif; letter-spacing: 0; }
.tiles { width: 1440px; height: 1170px; }
.tile path { vector-effect: non-scaling-stroke; }
.forest { fill: #d3deb9; }
.land { fill: #f1ede5; }
.pale { fill: #dfe5c8; }
.sea { fill: #aad3df; }
.river path { fill: none; stroke: #a2cfde; stroke-width: 2.8px; stroke-linejoin: round; }
.river.mid path { stroke-width: 8px; }
.river.wide path { stroke-width: 20px; }
.pa path, path.pa { fill: none; stroke: #84b893; stroke-width: 3px; stroke-linejoin: round; }
.border path, path.border { fill: none; stroke: #b3a0b9; stroke-width: 3.5px; stroke-linejoin: round; }
path.border.heavy { stroke-width: 7px; }
path.border.dark { stroke: #8a9792; stroke-width: 5px; }
.dash path { fill: none; stroke: #bba9bd; stroke-width: 2px; stroke-dasharray: 9 4; }
.grey path { fill: none; stroke: #bcb6b0; stroke-width: 2px; }
.rail path, path.rail { fill: none; stroke: #979390; stroke-width: 2px; }
.trunk path, path.trunk { fill: none; stroke: #df8b71; stroke-width: 4px; stroke-linejoin: round; }
.road path, path.road { fill: none; stroke: #e8b878; stroke-width: 3px; stroke-linejoin: round; }
.ferry path, path.ferry { fill: none; stroke: #7f9fd2; stroke-width: 2.5px; stroke-dasharray: 10 4; }
.zone path { fill: #aee0cc; fill-opacity: .85; stroke: #3f9c9f; stroke-width: 2.5px; stroke-linejoin: round; }
.zone path.z1 { fill: #bff0de; }
.zone path.z2 { fill: #aedccb; }
.zone path.z3 { fill: #98cdb6; }
.zone path.z4 { fill: #8bc5ad; }
.zone path.z5 { fill: #74b799; }
.zone path.empty { fill: none; }
.labels text { text-anchor: middle; font: 500 11.5px "Noto Sans Bengali", "Noto Sans", sans-serif; fill: #333; stroke: #f4f1ea; stroke-width: 1.6px; paint-order: stroke; }
.labels .latin text { font-size: 13px; }
.labels .big text { font-size: 14px; }
.labels .purple text { fill: #a284ad; }
.labels .green text { fill: #3f8f3f; }
.labels .huge text { font-size: 16px; font-weight: 600; }
.labels .italic text { font-style: italic; }
.labels .faint text { font-size: 13px; fill: #7fb07f; }

.map-left { position: absolute; left: 48px; top: 16px; }
.question { width: 522px; font-family: Inter, "Noto Sans", sans-serif; letter-spacing: -0.92px; }
.legend { width: 520px; height: 791px; margin-top: 16px; padding: 11px 10px 0; background: rgba(255,255,255,.7); font-size: 24px; line-height: 36px; letter-spacing: .16px; color: #202224; white-space: nowrap; }
.legend-title { height: 85px; font-weight: 700; line-height: 36px; letter-spacing: .06px; }
.legend ul { list-style: none; margin: 0; padding: 0; }
.legend li { height: 41px; display: flex; align-items: center; gap: 16px; }
.legend li.two { height: 68px; }
.legend li.tight { letter-spacing: -0.22px; }
.legend i { width: 28px; height: 28px; border-radius: 50%; }
.c1 { background: #7bad54; } .c2 { background: #cfe7bb; } .c3 { background: #3e552c; } .c4 { background: #4eb760; }
.c5 { background: #4cb4f9; } .c6 { background: #bb9531; } .c7 { background: #7df2f9; } .c8 { background: #e98843; }
.c9 { background: #9960ff; } .c10 { background: #3e55a0; } .c11 { background: #ff91bf; } .c12 { background: #ffff54; }
.c13 { background: #5074cc; } .c14 { background: #7d6423; } .c15 { background: #c4642d; } .c16 { background: #f53626; }

.map-controls { position: absolute; left: 1329px; top: 49px; display: flex; flex-direction: column; gap: 18px; }
.ctl { width: 62px; height: 62px; border: 2px solid #d9d9d9; border-radius: 4px; background: #fff; display: flex; align-items: center; justify-content: center; color: #262626; }
.ctl svg { width: 28px; height: 28px; overflow: visible; }

.map-bottom { position: absolute; left: 0; right: 0; bottom: 0; height: 170px; background: rgba(255,255,255,.55); font-size: 24px; color: #202224; }
.sizes { height: 126px; padding: 24px 42px 0 40px; }
.sizes-title { height: 48px; line-height: 37px; text-align: center; font-weight: 700; }
.ramp { display: grid; grid-template-columns: repeat(5, 268px); column-gap: 4px; }
.ramp span { height: 40px; line-height: 40px; text-align: center; font-weight: 700; color: #37629f; }
.r1 { background: #bff0de; } .r2 { background: #b2e1cc; } .r3 { background: #9ed3bb; } .r4 { background: #8fc8b2; } .r5 { background: #7cbba0; }
.attribution { height: 44px; display: flex; justify-content: flex-end; align-items: center; gap: 7px; padding: 0 44px 9px 0; line-height: 36px; letter-spacing: .17px; background: linear-gradient(rgba(255,255,255,.75) 10px, rgba(255,255,255,.35) 10px); white-space: nowrap; color: #333; }
.attribution a { color: #31759f; }
.flag { width: 24px; height: 16px; }

.side { padding: 40px 80px 0; }
.tabs { display: flex; }
.tab { width: 168px; gap: 18px; }
.tab.active { width: 165px; background: #4390f9; border-color: #4390f9; color: #fff; }
.cards { margin-top: 48px; padding: 8px 6px 6px; background: #eee; }
.card { background: #fff; }
.card + .card { border-top: 2px solid #e6e6e6; }
.card h2 { margin: 0; height: 90px; line-height: 84px; padding-left: 20px; border-bottom: 6px solid #3888d5; color: #3888d5; font-size: 28px; font-weight: 700; letter-spacing: -0.03px; }
.chart { width: 1268px; font-family: "Liberation Sans", Arial, sans-serif; font-size: 24px; letter-spacing: 0; }
.c-water { height: 620px; }
.c-sanitation { height: 120px; }
.key { fill: #333; }
.axis { fill: #6e7079; }
.pct text { text-anchor: middle; font-weight: 700; fill: #000; }

.indicator { flex: 1; border-top: 2px solid #fdfdfd; padding: 50px 84px 0; display: flex; flex-direction: column; }
.indicator-title { height: 121px; flex: none; line-height: 121px; text-align: center; border-radius: 4px 4px 0 0; background: #469598; color: #fff; font-size: 36px; font-weight: 700; letter-spacing: -0.4px; }
.indicator-body { flex: 1; background: #ebf2f5; }

.mask { position: absolute; inset: 0; background: rgba(0,0,0,.45); }
.drawer { position: absolute; top: 0; right: 0; width: 756px; height: 1800px; background: #fff; box-shadow: -6px 0 16px rgba(0,0,0,.12), -12px 0 56px rgba(0,0,0,.12), -24px 0 96px 32px rgba(0,0,0,.04); }
.drawer-head { height: 130px; padding: 0 0 0 64px; border-bottom: 2px solid #f0f0f0; display: flex; align-items: center; }
.close { width: 24px; height: 24px; margin-right: 40px; }
.menu { display: flex; flex-direction: column; border-right: 2px solid #f0f0f0; }
.menu .group { height: 78px; line-height: 76px; padding-left: 48px; color: #8c8c8c; border-bottom: 2px solid #f0f0f0; letter-spacing: -0.7px; }
.menu a { height: 88px; line-height: 85px; padding-left: 48px; border-bottom: 2px solid #f0f0f0; }
.menu .sub { padding-left: 96px; }
```
